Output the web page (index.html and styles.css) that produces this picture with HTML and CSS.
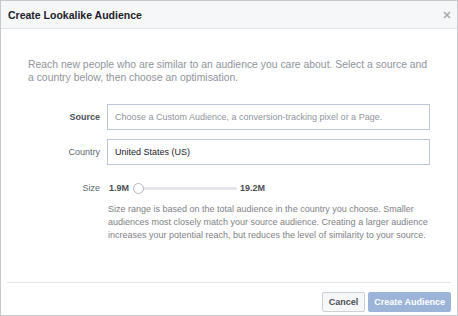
FILE: index.html
```html
<!DOCTYPE html>
<html lang="en">
  <head>
    <meta charset="UTF-8" />
    <title>Create Lookalike Audience</title>
    <link rel="stylesheet" href="styles.css">
  </head>
  <body>
    <div class="dialog">
      <div class="dialog-header">
        <div class="dialog-title">Create Lookalike Audience</div>
        <svg class="close-icon" width="8" height="8" viewBox="0 0 8 8">
          <path d="M1 1 L7 7 M7 1 L1 7" stroke="#a7abb1" stroke-width="1.6" fill="none" />
        </svg>
      </div>

      <div class="dialog-body">
        <p class="intro">
          Reach new people who are similar to an audience you care about. Select a source and<br>
          a country below, then choose an optimisation.
        </p>

        <div class="form-row form-row-first">
          <div class="form-label form-label-strong">Source</div>
          <div class="text-input placeholder">Choose a Custom Audience, a conversion-tracking pixel or a Page.</div>
        </div>

        <div class="form-row">
          <div class="form-label">Country</div>
          <div class="text-input">United States (US)</div>
        </div>

        <div class="form-row form-row-size">
          <div class="form-label">Size</div>
          <div class="size-control">
            <span class="size-value">1.9M</span>
            <div class="slider">
              <div class="slider-track"></div>
              <div class="slider-thumb"></div>
            </div>
            <span class="size-value">19.2M</span>
          </div>
        </div>

        <p class="help-text">
          Size range is based on the total audience in the country you choose. Smaller<br>
          audiences most closely match your source audience. Creating a larger audience<br>
          increases your potential reach, but reduces the level of similarity to your source.
        </p>
      </div>

      <div class="dialog-footer">
        <button class="btn">Cancel</button>
        <button class="btn btn-primary">Create Audience</button>
      </div>
    </div>
  </body>
</html>
```

FILE: styles.css
```css
* {
  margin: 0;
  padding: 0;
  box-sizing: border-box;
  font-family: "Liberation Sans", Arial, sans-serif;
}

body {
  width: 458px;
  height: 316px;
  overflow: hidden;
  background-color: #fff;
}

.dialog {
  width: 458px;
  height: 316px;
  border: 1px solid #c8c9cc;
  display: flex;
  flex-direction: column;
  background-color: #fff;
}

.dialog-header {
  height: 28px;
  background-color: #f6f7f9;
  border-bottom: 1px solid #e5e5e5;
  display: flex;
  align-items: center;
  justify-content: space-between;
  padding: 0 6px 0 7px;
}

.dialog-title {
  font-size: 10.5px;
  font-weight: bold;
  color: #1d2129;
}

.close-icon {
  display: block;
}

.dialog-body {
  flex: 1;
  padding: 29px 27px 0;
}

.intro {
  font-size: 10.4px;
  line-height: 13px;
  color: #90949c;
  white-space: nowrap;
  margin-bottom: 20px;
}

.form-row {
  display: flex;
  align-items: center;
  gap: 7px;
  margin-top: 9px;
}

.form-row-first {
  margin-top: 0;
}

.form-row-size {
  margin-top: 16px;
  height: 14px;
}

.form-label {
  width: 72px;
  text-align: right;
  font-size: 9px;
  color: #606770;
}

.form-label-strong {
  font-weight: bold;
  color: #4b4f56;
}

.text-input {
  width: 323px;
  height: 26px;
  border: 1px solid #bdc7d8;
  padding: 0 7px;
  font-size: 9px;
  line-height: 24px;
  color: #1d2129;
}

.placeholder {
  color: #90949c;
}

.size-control {
  display: flex;
  align-items: center;
  padding-left: 2px;
}

.size-value {
  font-size: 9px;
  font-weight: bold;
  color: #4b4f56;
}

.slider {
  position: relative;
  width: 104px;
  height: 11px;
  margin: 0 3px 0 4px;
}

.slider-track {
  position: absolute;
  left: 8px;
  right: 0;
  top: 4px;
  height: 3px;
  border-radius: 2px;
  background-color: #e4e6e9;
}

.slider-thumb {
  position: absolute;
  left: 0;
  top: 0;
  width: 11px;
  height: 11px;
  border-radius: 50%;
  border: 1px solid #b4b8be;
  background-color: #fff;
}

.help-text {
  margin: 8px 0 0 80px;
  font-size: 9px;
  line-height: 13px;
  color: #7f8187;
  white-space: nowrap;
}

.dialog-footer {
  margin: 0 6px;
  border-top: 1px solid #e2e4e7;
  padding: 9px 0 3px;
  display: flex;
  justify-content: flex-end;
  gap: 3px;
}

.btn {
  height: 20px;
  padding: 0 6px;
  border: 1px solid #ced0d4;
  border-radius: 2px;
  background-color: #f6f7f9;
  font-size: 9px;
  font-weight: bold;
  color: #4b4f56;
}

.btn-primary {
  padding: 0 5px;
  border-color: #9cb4d8;
  background-color: #9cb4d8;
  color: #fff;
}
```
